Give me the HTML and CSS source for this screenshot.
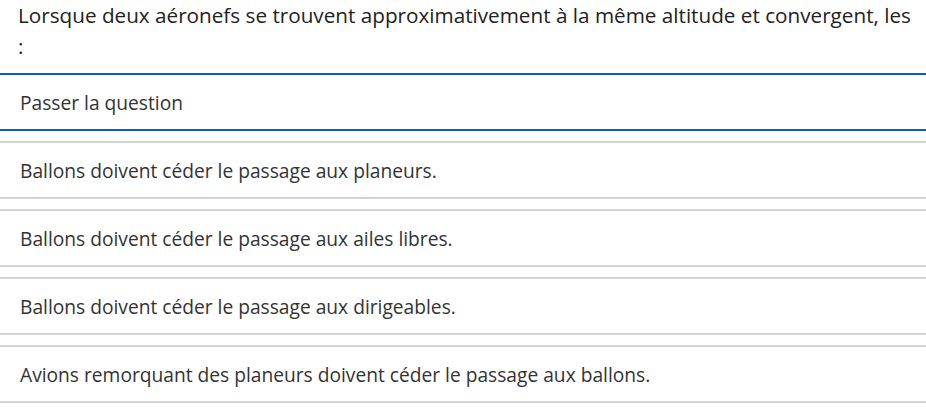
FILE: index.html
```html
<!DOCTYPE html>
<html lang="fr">
<head>
<meta charset="utf-8">
<link rel="stylesheet" href="styles.css">
</head>
<body>
<div class="quiz">
  <div class="question">Lorsque deux aéronefs se trouvent approximativement à la même altitude et convergent, les :</div>
  <div class="option skip">Passer la question</div>
  <div class="option">Ballons doivent céder le passage aux planeurs.</div>
  <div class="option">Ballons doivent céder le passage aux ailes libres.</div>
  <div class="option">Ballons doivent céder le passage aux dirigeables.</div>
  <div class="option">Avions remorquant des planeurs doivent céder le passage aux ballons.</div>
</div>
</body>
</html>
```
FILE: styles.css
```css
html, body {
  margin: 0;
  padding: 0;
  background: #ffffff;
}
.quiz {
  display: flex;
  flex-direction: column;
  font-family: "Open Sans", "Liberation Sans", sans-serif;
}
.question {
  font-size: 20.7px;
  line-height: 30.5px;
  color: #222222;
  padding: 0 10px 12px 18px;
}
.option {
  display: flex;
  align-items: center;
  height: 54px;
  padding: 0 20px;
  border-top: 2px solid #d3d3d3;
  border-bottom: 2px solid #d3d3d3;
  margin-top: 10px;
  font-size: 19.2px;
  color: #333333;
}
.option.skip {
  margin-top: 0;
  border-color: #0a5ad6;
}
```
